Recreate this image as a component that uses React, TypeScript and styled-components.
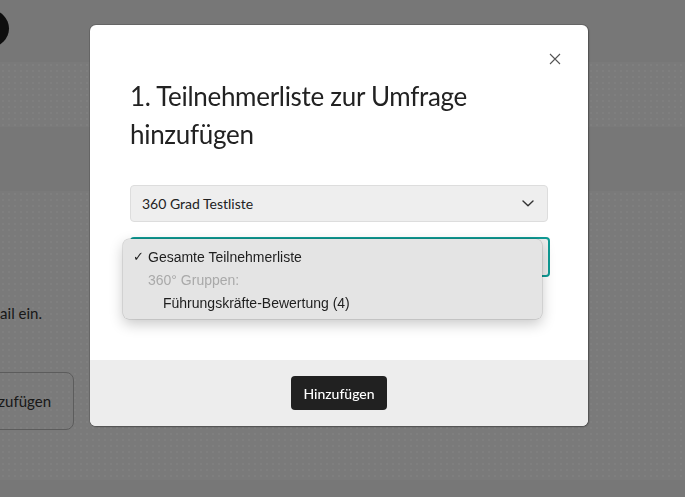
import React from 'react';
import styled, { createGlobalStyle } from 'styled-components';

const GlobalStyle = createGlobalStyle`
  html, body {
    margin: 0;
    padding: 0;
    height: 100%;
    overflow: hidden;
  }
  body {
    font-family: Lato, "Open Sans", sans-serif;
    color: #333;
  }
  * {
    box-sizing: border-box;
  }
`;

const dots = `
  background-image: radial-gradient(rgba(255, 255, 255, 1) 0.8px, transparent 1.1px);
  background-size: 6px 6px;
`;

const Page = styled.div`
  display: flex;
  flex-direction: column;
  height: 497px;
  background: #eeeeee;
`;

const Header = styled.header`
  height: 62px;
  display: flex;
  align-items: flex-start;
  padding-top: 10px;
  background: #eeeeee;
`;

const Avatar = styled.div`
  width: 37px;
  height: 37px;
  margin-left: -28px;
  border-radius: 50%;
  background: #1c1c1c;
`;

const Band = styled.div<{ $h: number; $dotted?: boolean }>`
  height: ${p => p.$h}px;
  background-color: ${p => (p.$dotted ? '#f4f4f4' : '#eeeeee')};
  ${p => (p.$dotted ? dots : '')}
`;

const Content = styled.section`
  height: 289px;
  background-color: #f4f4f4;
  ${dots}
  display: flex;
  flex-direction: column;
  align-items: flex-start;
  padding-top: 111px;
`;

const ClipRow = styled.div<{ $w: number }>`
  width: ${p => p.$w}px;
  display: flex;
  justify-content: flex-end;
  white-space: nowrap;
`;

const Hint = styled.p`
  margin: 0;
  font-size: 15px;
  line-height: 22px;
  color: #333;
`;

const GhostButton = styled.div`
  margin-top: 48px;
  flex: none;
  height: 58px;
  padding: 0 22px 0 24px;
  display: flex;
  align-items: center;
  border: 1.5px solid #b8b8b8;
  border-radius: 8px;
  font-size: 15px;
  color: #333;
`;

const Overlay = styled.div`
  position: fixed;
  inset: 0;
  background: rgba(0, 0, 0, 0.5);
  padding: 25px 0 0 90px;
`;

const Modal = styled.div`
  position: relative;
  width: 498px;
  border-radius: 6px;
  background: #fff;
  overflow: hidden;
  box-shadow: 0 0 0 1px rgba(0, 0, 0, 0.15), 1px 1px 2px rgba(0, 0, 0, 0.25);
`;

const Close = styled.button`
  position: absolute;
  top: 27px;
  right: 27px;
  width: 13px;
  height: 13px;
  padding: 0;
  border: 0;
  background: none;
  display: flex;
  align-items: center;
  justify-content: center;
`;

const Body = styled.div`
  padding: 52px 40px 83px;
`;

const Title = styled.h2`
  margin: 0 0 32px;
  font-size: 26px;
  line-height: 38px;
  font-weight: 400;
  color: #222;
  letter-spacing: -0.3px;
`;

const Select = styled.div<{ $focused?: boolean }>`
  position: relative;
  display: flex;
  align-items: center;
  justify-content: space-between;
  padding: 0 13px 0 11px;
  height: ${p => (p.$focused ? 40 : 37)}px;
  margin-top: ${p => (p.$focused ? 15 : 0)}px;
  margin-right: ${p => (p.$focused ? -2 : 0)}px;
  border-radius: 4px;
  background: #eeeeee;
  border: ${p => (p.$focused ? '2px solid #0f9a94' : '1px solid #dddddd')};
  font-size: 14px;
  color: #222;
`;

const Menu = styled.ul`
  position: absolute;
  top: 0;
  left: -9px;
  width: 419px;
  margin: 0;
  padding: 6px 0 5px;
  list-style: none;
  background: #e4e4e4;
  border-radius: 6px;
  box-shadow: 0 0 0 0.5px rgba(0, 0, 0, 0.18), 0 5px 14px rgba(0, 0, 0, 0.22);
  font-family: "Liberation Sans", Arial, sans-serif;
  font-size: 14px;
  z-index: 2;
`;

const MenuItem = styled.li<{ $indent: number; $muted?: boolean }>`
  display: flex;
  align-items: center;
  height: 23px;
  padding-left: ${p => p.$indent}px;
  color: ${p => (p.$muted ? '#a9a9a9' : '#1e1e1e')};
`;

const Check = styled.span`
  width: 15px;
  margin-left: -15px;
  font-size: 13px;
`;

const Footer = styled.div`
  height: 66px;
  display: flex;
  align-items: center;
  justify-content: center;
  background-color: #ededed;
`;

const PrimaryButton = styled.button`
  height: 34px;
  padding: 0 12px;
  border: 0;
  border-radius: 4px;
  background: #212121;
  color: #fff;
  font-family: Lato, sans-serif;
  font-size: 14px;
  font-weight: 500;
`;

const Chevron = () => (
  <svg width="12" height="7" viewBox="0 0 12 7" fill="none">
    <path d="M1 1l5 4.8L11 1" stroke="#333" strokeWidth="1.4" strokeLinecap="round" strokeLinejoin="round" />
  </svg>
);

const CloseIcon = () => (
  <svg width="12" height="12" viewBox="0 0 12 12" fill="none">
    <path d="M1 1l10 10M11 1L1 11" stroke="#555" strokeWidth="1.1" />
  </svg>
);

export default function App() {
  return (
    <>
      <GlobalStyle />
      <Page>
        <Header>
          <Avatar />
        </Header>
        <Band $h={65} $dotted />
        <Band $h={64} />
        <Content>
          <ClipRow $w={42}>
            <Hint>Bitte tragen Sie die E-Mail ein.</Hint>
          </ClipRow>
          <ClipRow $w={74}>
            <GhostButton>Teilnehmer hinzufügen</GhostButton>
          </ClipRow>
        </Content>
        <Band $h={17} />
      </Page>
      <Overlay>
        <Modal>
          <Close aria-label="Schließen">
            <CloseIcon />
          </Close>
          <Body>
            <Title>
              1. Teilnehmerliste zur Umfrage
              <br />
              hinzufügen
            </Title>
            <Select>
              <span>360 Grad Testliste</span>
              <Chevron />
            </Select>
            <Select $focused>
              <span />
              <Chevron />
              <Menu>
                <MenuItem $indent={25}>
                  <Check>✓</Check>Gesamte Teilnehmerliste
                </MenuItem>
                <MenuItem $indent={25} $muted>
                  360° Gruppen:
                </MenuItem>
                <MenuItem $indent={40}>Führungskräfte-Bewertung (4)</MenuItem>
              </Menu>
            </Select>
          </Body>
          <Footer>
            <PrimaryButton>Hinzufügen</PrimaryButton>
          </Footer>
        </Modal>
      </Overlay>
    </>
  );
}
